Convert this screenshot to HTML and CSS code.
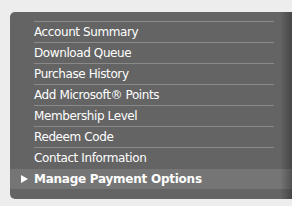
FILE: index.html
```html
<!DOCTYPE html>
<html>
  <head>
    <title>My Account</title>
    <link rel="stylesheet" href="styles.css">
  </head>
  <body>
    <div class="panel">
      <ul class="menu">
        <li class="item">Account Summary</li>
        <li class="item">Download Queue</li>
        <li class="item">Purchase History</li>
        <li class="item">Add Microsoft® Points</li>
        <li class="item">Membership Level</li>
        <li class="item">Redeem Code</li>
        <li class="item">Contact Information</li>
      </ul>
      <div class="current"><span class="arrow"></span>Manage Payment Options</div>
    </div>
  </body>
</html>
```

FILE: styles.css
```css
body {
  margin: 0;
  background-color: #ededed;
  font-family: "DejaVu Sans", Verdana, sans-serif;
  overflow: hidden;
}

.panel {
  position: relative;
  margin: 12px 0 0 10px;
  padding: 9px 0 10px 0;
  background-color: #646464;
  border-radius: 5px 0 0 5px;
  color: #fff;
}

.panel::after {
  content: "";
  position: absolute;
  top: 0;
  right: 0;
  bottom: 0;
  width: 12px;
  background: linear-gradient(to right, rgba(0, 0, 0, 0), rgba(0, 0, 0, 0.3));
}

.menu {
  list-style: none;
  margin: 0 18px 0 24px;
  padding: 0;
}

.item {
  border-top: 1px solid #8a8a8a;
  height: 20px;
  line-height: 20px;
  font-size: 12px;
  letter-spacing: -0.4px;
  white-space: nowrap;
}

.current {
  display: flex;
  align-items: center;
  margin-top: 1px;
  height: 20px;
  line-height: 20px;
  padding-left: 11px;
  background-color: #757575;
  font-size: 12px;
  font-weight: bold;
  letter-spacing: -0.25px;
  white-space: nowrap;
}

.arrow {
  width: 0;
  height: 0;
  border-top: 4px solid transparent;
  border-bottom: 4px solid transparent;
  border-left: 7px solid #fff;
  margin-right: 6px;
}
```
